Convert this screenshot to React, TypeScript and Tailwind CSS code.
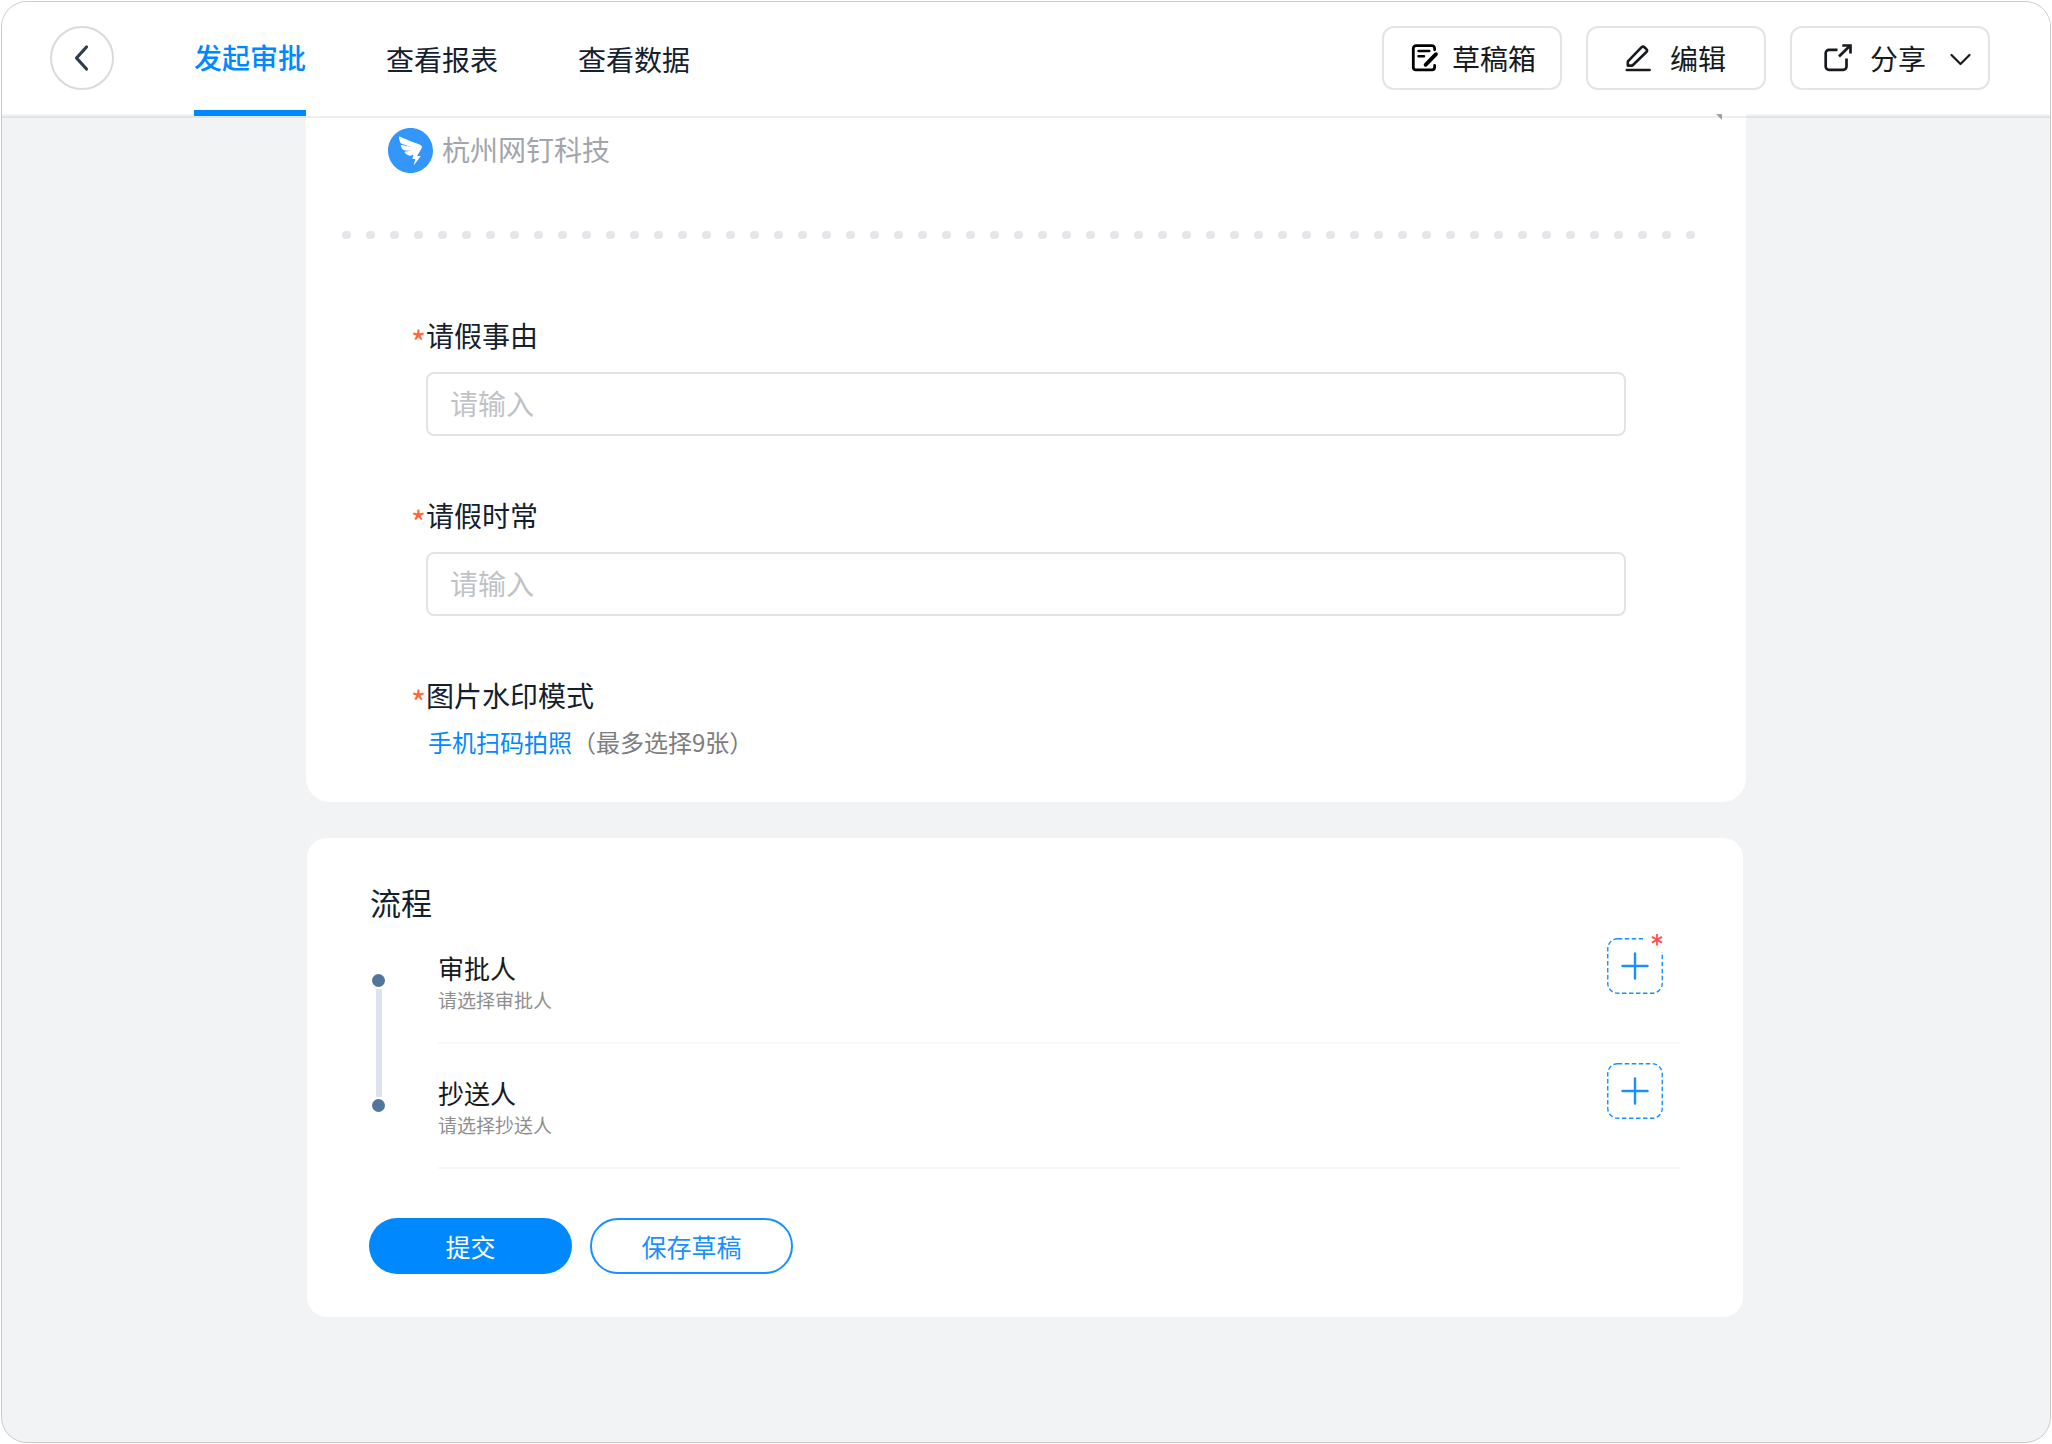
import React from "react";
import { AiFillDingtalkCircle } from "react-icons/ai";

const tabs = [
  { label: "发起审批", active: true },
  { label: "查看报表", active: false },
  { label: "查看数据", active: false },
];

const fields = [
  { id: "reason", label: "请假事由" },
  { id: "duration", label: "请假时常" },
];

const steps = [
  { title: "审批人", hint: "请选择审批人", required: true },
  { title: "抄送人", hint: "请选择抄送人", required: false },
];

function DraftIcon() {
  return (
    <svg className="size-7 shrink-0" viewBox="0 0 28 28" fill="none" stroke="#000" strokeWidth="2.8" strokeLinecap="round" aria-hidden="true">
      <path d="M23.6 5.8V4.4a2.7 2.7 0 0 0-2.7-2.7H5a2.7 2.7 0 0 0-2.7 2.7v18.8A2.7 2.7 0 0 0 5 25.9h15.9a2.7 2.7 0 0 0 2.7-2.7V21.5" />
      <path d="M7.5 6.9H18.3M7.5 12.2H13" strokeWidth="2.5" />
      <path d="M25 10.2L14.6 20.8" strokeWidth="3.8" />
    </svg>
  );
}

function EditIcon() {
  return (
    <svg className="size-7 shrink-0" viewBox="0 0 28 28" fill="none" stroke="#171a1f" strokeWidth="2.6" strokeLinecap="round" strokeLinejoin="round" aria-hidden="true">
      <path d="M3.8 21.6V18.2a2 2 0 0 1 .6-1.4L17.6 3.2a2 2 0 0 1 2.8 0l2 2a2 2 0 0 1 0 2.8L9 21a2 2 0 0 1-1.4.6z" />
      <path d="M2.8 26H25.6" />
    </svg>
  );
}

function ShareIcon() {
  return (
    <svg className="size-7 shrink-0" viewBox="0 0 28 28" fill="none" stroke="#171a1f" strokeWidth="2.7" aria-hidden="true">
      <path d="M13.5 5.9H4.9a3.2 3.2 0 0 0-3.2 3.2v13.5a3.2 3.2 0 0 0 3.2 3.2h14.4a3.2 3.2 0 0 0 3.2-3.2V14.5" />
      <path d="M15 12.5L26.2 1.5" />
      <path d="M18.3 1.5H26.5V9.5" />
    </svg>
  );
}

function AddButton({ label, required }: { label: string; required: boolean }) {
  return (
    <button type="button" aria-label={label} className="relative size-14 shrink-0">
      <svg className="size-14" viewBox="0 0 56 56" fill="none" stroke="#1890ff" aria-hidden="true">
        <rect x="0.75" y="0.75" width="54.5" height="54.5" rx="10" strokeWidth="1.4" strokeDasharray="4.5 2.5" />
        <path d="M15.5 28H40.5M28 15.5V40.5" strokeWidth="2.4" strokeLinecap="round" />
      </svg>
      {required && (
        <span className="absolute -top-3 -right-2 flex h-[26px] w-7 items-center justify-center bg-white font-['Inter'] text-[28px] leading-none text-[#ff4d4f]">
          <span className="pt-3">*</span>
        </span>
      )}
    </button>
  );
}

function FieldLabel({ id, children }: { id: string; children: React.ReactNode }) {
  return (
    <label htmlFor={id} className="flex h-10 pl-[105px] text-[28px] leading-10 text-[#14202e]">
      <span className="w-[15px] pt-1.5 text-[32px] text-[#ff6633]">*</span>
      {children}
    </label>
  );
}

const toolButton = "flex h-16 items-center rounded-xl border-2 border-[#e4e4e5] bg-white text-[28px] leading-10 text-[#171a1d]";

export default function App() {
  return (
    <div className="flex min-h-screen bg-white p-px font-['Noto_Sans_CJK_SC',sans-serif]">
      <div className="flex min-w-0 flex-1 flex-col overflow-hidden rounded-[26px] border border-[#c9cbcd] bg-[#f2f3f5]">
        <header className="relative z-10 flex h-28 items-center justify-between bg-white pr-[60px] pl-12">
          <div className="flex h-full items-center gap-20">
            <button type="button" aria-label="返回" className="flex size-16 items-center justify-center rounded-full border-2 border-[#d9dadb]">
              <svg className="size-7" viewBox="0 0 28 28" fill="none" stroke="#2c3e4e" strokeWidth="3.2" strokeLinecap="round" strokeLinejoin="round" aria-hidden="true">
                <path d="M18.5 3L8.5 14L18.5 25" />
              </svg>
            </button>
            <nav className="flex h-full gap-20 text-[28px] leading-10">
              {tabs.map((tab) =>
                tab.active ? (
                  <a key={tab.label} href="#" aria-current="page" className="relative flex h-full items-center pb-0.5 font-medium text-[#0089ff]">
                    {tab.label}
                    <span className="absolute inset-x-0 -bottom-0.5 h-1.5 bg-[#0089ff]" />
                  </a>
                ) : (
                  <a key={tab.label} href="#" className="flex h-full items-center pt-0.5 text-[#14202e]">
                    {tab.label}
                  </a>
                ),
              )}
            </nav>
          </div>
          <div className="flex gap-6">
            <button type="button" className={`${toolButton} w-[180px] gap-[13px] pl-[27px]`}>
              <DraftIcon />
              草稿箱
            </button>
            <button type="button" className={`${toolButton} w-[180px] gap-[18px] pl-9`}>
              <EditIcon />
              编辑
            </button>
            <button type="button" className={`${toolButton} w-[200px] gap-[18px] pl-8`}>
              <ShareIcon />
              分享
              <svg className="ml-1 h-4 w-6" viewBox="0 0 24 16" fill="none" stroke="#171a1f" strokeWidth="2.2" strokeLinecap="round" strokeLinejoin="round" aria-hidden="true">
                <path d="M3.5 5L12.5 14L21.5 5" />
              </svg>
            </button>
          </div>
        </header>

        <main className="relative flex flex-1 flex-col items-center">
          <div className="absolute inset-x-0 top-0.5 z-10 h-0.5 bg-[#14202e]/8" />
          <form className="w-full max-w-[1440px]">
            <section className="relative rounded-b-3xl bg-white pt-[13px] pb-[42px]">
              <svg className="absolute top-0 right-6 h-1.5 w-1.5" viewBox="0 0 6 6" aria-hidden="true">
                <path d="M0 0H6V6Z" fill="#a2a5aa" />
              </svg>
              <div className="flex h-[46px] items-center gap-[9px] pl-[82px] text-[28px] leading-[44px] text-[#a2a6ac]">
                <AiFillDingtalkCircle className="size-[45px] text-[#3296fa]" viewBox="64 64 896 896" aria-hidden="true" />
                <span className="pb-0.5">杭州网钉科技</span>
              </div>
              <div className="mt-[58px] mr-[51px] mb-[76px] ml-9 flex justify-between">
                {Array.from({ length: 57 }, (_, i) => (
                  <span key={i} className="h-2 w-[9px] rounded-full bg-[#e5e5ea]" />
                ))}
              </div>
              <div className="flex flex-col gap-[59px]">
                {fields.map((field) => (
                  <div key={field.id}>
                    <FieldLabel id={field.id}>{field.label}</FieldLabel>
                    <div className="mt-[17px] px-[120px]">
                      <input
                        id={field.id}
                        type="text"
                        placeholder="请输入"
                        className="block h-16 w-full rounded-lg border-2 border-[#e3e3e4] px-[22px] pb-0.5 text-[28px] leading-10 text-[#14202e] placeholder:text-[#bfc2c6]"
                      />
                    </div>
                  </div>
                ))}
                <div>
                  <FieldLabel id="photo">图片水印模式</FieldLabel>
                  <div className="mt-[9px] flex pl-[122px] text-2xl leading-9">
                    <button id="photo" type="button" className="text-[#0089ff]">
                      手机扫码拍照
                    </button>
                    <span className="text-[#7d7d7d]">（最多选择9张）</span>
                  </div>
                </div>
              </div>
            </section>

            <section className="mt-9 mr-[3px] ml-px rounded-[20px] bg-white pt-12 pr-[63px] pb-[43px] pl-[62px]">
              <h2 className="mb-px ml-px text-[31px] leading-8 text-[#14202e]">流程</h2>
              <div className="flex">
                <div className="mr-[53px] ml-[3px] flex flex-col items-center gap-[2px] pt-[55px] pb-[57px]">
                  <span className="size-[13px] rounded-full bg-[#51759c]" />
                  <span className="w-1.5 flex-1 bg-[#dde3ec]" />
                  <span className="size-[13px] rounded-full bg-[#51759c]" />
                </div>
                <ul className="flex-1">
                  {steps.map((step) => (
                    <li key={step.title} className="flex h-[125px] items-start justify-between border-b-2 border-[#f6f7f8] pt-[19px] pr-[17px]">
                      <div className="pt-[15px]">
                        <h3 className="text-[26px] leading-[30px] text-[#171a1d]">{step.title}</h3>
                        <p className="mt-[5px] text-[19px] leading-6 text-[#8e8e8e]">{step.hint}</p>
                      </div>
                      <AddButton label={`添加${step.title}`} required={step.required} />
                    </li>
                  ))}
                </ul>
              </div>
              <div className="mt-[49px] flex gap-[18px] text-[25px] leading-9">
                <button type="submit" className="h-14 w-[203px] rounded-full bg-[#0089ff] text-white">
                  提交
                </button>
                <button type="button" className="h-14 w-[203px] rounded-full border-2 border-[#1890ff] text-[#1890ff]">
                  保存草稿
                </button>
              </div>
            </section>
          </form>
        </main>
      </div>
    </div>
  );
}
